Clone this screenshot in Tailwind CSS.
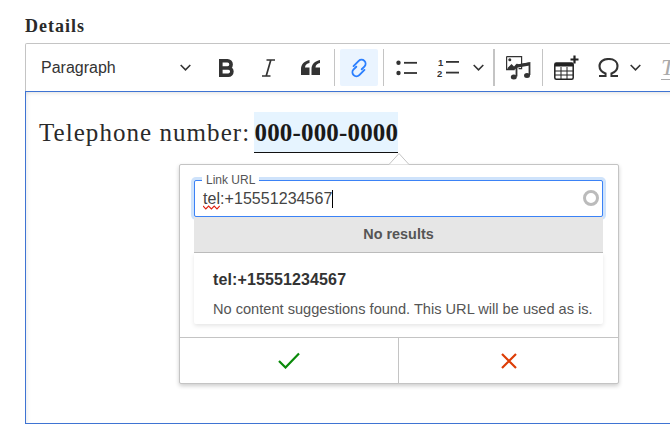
<!DOCTYPE html>
<html lang="en">
<head>
  <meta charset="UTF-8" />
  <title>Details</title>
  <script src="https://cdn.jsdelivr.net/npm/@tailwindcss/browser@4"></script>
</head>
<body class="bg-white h-[430px] w-[670px] overflow-hidden font-['Liberation_Sans',sans-serif]">
  <div class="pl-[25px] pt-[16px] w-[670px] overflow-hidden">
    <div class="h-[27px] text-[18px] leading-[21px] tracking-[1px] font-bold text-[#2a2a2a] font-['Liberation_Serif',serif]">Details</div>

    <!-- toolbar -->
    <div class="w-[700px] h-[48px] border border-b-0 border-[#c4c4c4] rounded-tl-[2px] bg-white flex items-center pl-[15px] text-[#333]">
      <div class="w-[150px] shrink-0 text-[16px] text-[#333] flex items-center justify-between">
        <span>Paragraph</span>
        <svg class="w-[11px] h-[7px]" viewBox="0 0 11 7" fill="none" stroke="#333" stroke-width="1.6"><path d="M.7 1l4.800 4.800L10.300 1"/></svg>
      </div>
      <svg class="ml-[28px] w-[15px] h-[18px] shrink-0" viewBox="0 0 15 18" fill="none" stroke="#333" stroke-width="3.600"><path d="M1.800 1.800h6.700a3.600 3.600 0 0 1 0 7.200H1.800zM1.800 9h7.500a3.600 3.600 0 0 1 0 7.200H1.800z"/></svg>
      <svg class="ml-[28px] w-[13px] h-[18px] shrink-0" viewBox="0 0 13 18" fill="none" stroke="#333" stroke-width="1.700"><path d="M4.500 1H13M0 17h8.500M8.800 1L4.200 17"/></svg>
      <svg class="ml-[26px] w-[19px] h-[15px] shrink-0" viewBox="0 0 19 15" fill="#333"><path d="M8.500 0C3.500 1 0 4 0 9v6h8.500V7.500H4C4 5 6 3.500 8.500 3zM19 0c-5 1-8.500 4-8.500 9v6H19V7.500h-4.500c0-2.500 2-4 4.500-4.500z"/></svg>
      <div class="ml-[14px] w-px h-[37px] shrink-0 bg-[#c4c4c4]"></div>
      <div class="ml-[5px] w-[38px] h-[37px] shrink-0 rounded-[2px] bg-[#eaf4ff] flex items-center justify-center">
        <svg class="w-[20px] h-[20px]" viewBox="0 0 20 20" fill="none" stroke="#2b7fff" stroke-width="1.900" stroke-linecap="round"><g transform="rotate(-45 10 10)"><path d="M7.500 4.800h7.300a4 4 0 0 1 0 8H11"/><path d="M12.500 15.200H5.200a4 4 0 0 1 0-8H9"/></g></svg>
      </div>
      <div class="ml-[5px] w-px h-[37px] shrink-0 bg-[#c4c4c4]"></div>
      <svg class="ml-[12px] w-[21px] h-[16px] shrink-0" viewBox="0 0 21 16" fill="#333"><circle cx="2.500" cy="2.800" r="2.200"/><circle cx="2.500" cy="13" r="2.200"/><rect x="8" y="1.900" width="13" height="1.800"/><rect x="8" y="12.100" width="13" height="1.800"/></svg>
      <svg class="ml-[20px] w-[22px] h-[19px] shrink-0" viewBox="0 0 22 19" fill="#333"><text x="1" y="7.500" font-size="9.500" font-weight="700" font-family="Liberation Sans">1</text><text x="0" y="18.500" font-size="9.500" font-weight="700" font-family="Liberation Sans">2</text><rect x="9" y="3" width="13" height="1.800"/><rect x="9" y="13.700" width="13" height="1.800"/></svg>
      <svg class="ml-[14px] w-[11px] h-[7px] shrink-0" viewBox="0 0 11 7" fill="none" stroke="#333" stroke-width="1.600"><path d="M.7 1l4.800 4.800L10.300 1"/></svg>
      <div class="ml-[9px] w-[2px] h-[37px] shrink-0 bg-[#c4c4c4]"></div>
      <svg class="ml-[11px] w-[25px] h-[24px] shrink-0" viewBox="0 0 25 24" fill="none" stroke="#333"><path stroke-width="1.200" d="M.6.6h15v12h-3M.6.600v13h8"/><circle cx="3.800" cy="3.800" r="1.500" fill="#333" stroke="none"/><path fill="#333" stroke="none" d="M1.500 12l4-4 2.500 2.500 3-3 2 2-4 4H1.500z"/><path stroke-width="1.800" d="M10.500 20.500V9.500L23.500 7v12"/><path stroke-width="3" d="M10.500 10.300L23.500 8"/><ellipse cx="7.800" cy="21" rx="3" ry="2.500" fill="#333" stroke="none"/><ellipse cx="21" cy="19.500" rx="3" ry="2.500" fill="#333" stroke="none"/></svg>
      <div class="ml-[11px] w-px h-[37px] shrink-0 bg-[#c4c4c4]"></div>
      <svg class="ml-[11px] w-[25px] h-[25px] shrink-0" viewBox="0 0 25 25" fill="none" stroke="#222"><rect x=".8" y="8" width="18.400" height="16.200" rx="1.500" stroke-width="1.500"/><path fill="#222" stroke="none" d="M1 8h18v3.500H1z"/><path stroke-width="1" d="M7 12v12M13 12v12M1 16h18M1 20h18"/><path stroke-width="2.200" d="M20.500 .5v8M16.500 4.500h8"/></svg>
      <svg class="ml-[19px] w-[21px] h-[19px] shrink-0" viewBox="0 0 21 19" fill="none" stroke="#333" stroke-width="2.100"><path d="M1 18h6.500v-2.500C3.500 14 1.500 11 1.500 8 1.500 3.500 5.500 1 10.500 1s9 2.500 9 7c0 3-2 6-6 7.500V18H20"/></svg>
      <svg class="ml-[11px] w-[11px] h-[7px] shrink-0" viewBox="0 0 11 7" fill="none" stroke="#333" stroke-width="1.600"><path d="M.7 1l4.800 4.800L10.300 1"/></svg>
      <span class="ml-[20px] text-[24px] leading-none italic text-[#aaa] font-['Liberation_Serif',serif] border-b border-[#aaa]">T</span>
    </div>

    <!-- editing area -->
    <div class="relative w-[700px] h-[333px] border border-r-0 border-[#3f74d3] shadow-[inset_0_4px_4px_-3px_rgba(0,0,0,0.12),inset_4px_0_4px_-3px_rgba(0,0,0,0.08)] pt-[20px] pl-[13px]">
      <p class="text-[25px] leading-[41px] tracking-[1.05px] text-[#2a2a2a] font-['Liberation_Serif',serif]">Telephone number: <span class="-ml-[3px] font-bold tracking-[0.17px] inline-block h-[41px] bg-[#e6f4ff] border-b border-[#111] text-[#1a1a1a]">000-000-0000</span></p>

      <!-- link popup -->
      <div class="absolute left-[153px] top-[72px] w-[440px] h-[220px] bg-white border border-[#c4c4c4] rounded-[2px] shadow-[0_2px_4px_rgba(0,0,0,0.2)]">
        <svg class="absolute left-[209px] top-[-12px] w-[20px] h-[12px]" viewBox="0 0 20 12" fill="#fff" stroke="#c4c4c4"><path d="M0 11.500L10 .5l10 11"/></svg>
        <div class="relative ml-[14px] mt-[15px] w-[409px] h-[37px] border border-[#3b82f6] rounded-[2px] shadow-[0_0_0_3px_#cfe3fb] bg-white flex items-center pl-[8px] text-[16px] tracking-[0.05px] text-[#444]">
          <span class="absolute left-[7px] top-[-8px] bg-white px-[4px] text-[12px] leading-[14px] tracking-normal text-[#555]">Link URL</span>
          <span>tel:+15551234567</span><span class="w-px h-[18px] bg-black"></span>
          <svg class="absolute left-[8px] top-[24px] w-[17px] h-[5px]" viewBox="0 0 17 5" fill="none" stroke="#e02010" stroke-width="1.100"><path d="M0 1l2.800 3 2.800-3 2.800 3 2.800-3 2.800 3 2.800-3"/></svg>
          <span class="absolute right-[3px] top-[9px] w-[16px] h-[16px] rounded-full border-[3px] border-[#bbb]"></span>
        </div>
        <div class="relative ml-[14px] w-[409px] h-[36px] bg-[#e6e6e6] border-b border-[#bbb] flex items-center justify-center text-[14.400px] font-bold text-[#555]">No results</div>
        <div class="ml-[14px] w-[409px] h-[71px] bg-white rounded-b-[2px] shadow-[0_2px_4px_rgba(0,0,0,0.1)] pl-[19px] pt-[17px]">
          <div class="text-[16px] leading-[20px] tracking-[0.12px] font-bold text-[#333]">tel:+15551234567</div>
          <div class="mt-[9px] text-[14.600px] leading-[20px] text-[#555] whitespace-nowrap">No content suggestions found. This URL will be used as is.</div>
        </div>
        <div class="mt-[13px] h-[46px] border-t border-[#c4c4c4] flex">
          <div class="w-[219px] border-r border-[#c4c4c4] flex items-center justify-center">
            <svg class="w-[22px] h-[17px]" viewBox="0 0 22 17" fill="none" stroke="#0a8a0a" stroke-width="2.200"><path d="M1 9l6.500 6.500L21 1.500"/></svg>
          </div>
          <div class="flex-1 flex items-center justify-center">
            <svg class="w-[16px] h-[16px]" viewBox="0 0 16 16" fill="none" stroke="#dd3d06" stroke-width="2.200"><path d="M1 1l14 14M15 1L1 15"/></svg>
          </div>
        </div>
      </div>
    </div>
  </div>
</body>
</html>
